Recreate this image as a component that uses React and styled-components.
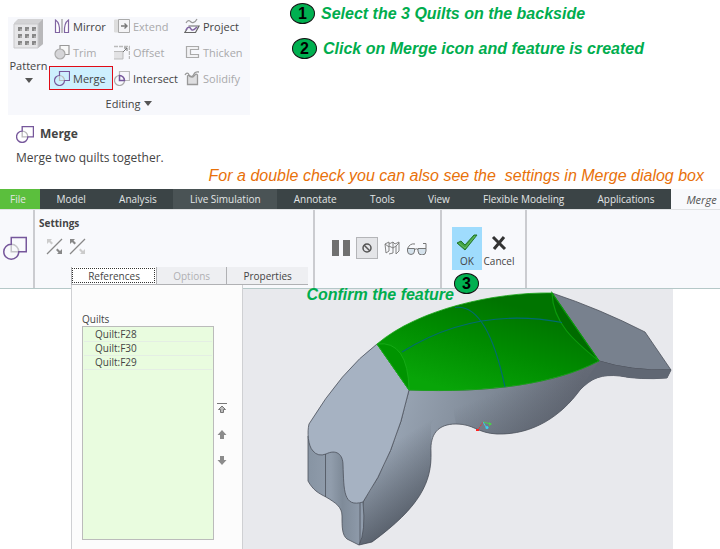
import React from "react";
import styled, { createGlobalStyle } from "styled-components";

const commands = [
    { name: "Mirror", icon: "mirror" },
    { name: "Extend", icon: "extend", off: true },
    { name: "Project", icon: "project" },
    { name: "Trim", icon: "trim", off: true },
    { name: "Offset", icon: "offset", off: true },
    { name: "Thicken", icon: "thicken", off: true },
    { name: "Merge", icon: "merge", active: true },
    { name: "Intersect", icon: "intersect" },
    { name: "Solidify", icon: "solidify", off: true },
];

const tabs = ["Model", "Analysis", "Live Simulation", "Annotate", "Tools", "View", "Flexible Modeling", "Applications"];

const quilts = ["Quilt:F28", "Quilt:F30", "Quilt:F29"];

const shapes = {
    mirror: (
        <g fill="#fff" strokeWidth="1.2">
            <path d="M1.500 2v12.500H5.500C6 8 4.500 4 1.500 2z" stroke="#8064a2" />
            <path d="M14.500 2v12.500H10.500C10 8 11.500 4 14.500 2z" stroke="#8064a2" />
            <path d="M8 1v14" stroke="#999" />
        </g>
    ),
    extend: (
        <g fill="none" stroke="#999">
            <path d="M.5 2h4v12h-4z" fill="#ddd" stroke="#ddd" />
            <path d="M4.500 1.500h11v13h-11z" fill="#f4f4f6" stroke="#aaa" />
            <path d="M7 8h6M10.500 5.500L13 8l-2.500 2.500" stroke="#777" strokeWidth="1.400" />
        </g>
    ),
    project: (
        <g fill="none" strokeWidth="1.200">
            <path d="M2 5c2-4 4-2 5-1s4 1 6-3" stroke="#999" />
            <path d="M4.500 8H15l-3.500 6.500H.8L3 11" stroke="#666" />
            <path d="M2 12c2-4 4-3 5-1s3 1 6-2" stroke="#8064a2" strokeWidth="1.600" />
        </g>
    ),
    trim: (
        <g fill="#e4e4e6" stroke="#aaa" strokeWidth="1.200">
            <path d="M6 1.500h9v9H6z" fill="#f8f8f8" stroke="#999" />
            <circle cx="6" cy="10" r="5" fill="#d5d5d8" />
        </g>
    ),
    offset: (
        <g fill="none" stroke="#999">
            <path d="M0 2.500h15.500V15" stroke="#bbb" strokeDasharray="4 1" strokeWidth="1.500" />
            <path d="M0 7.500h9V15H0" fill="#e2e2e4" stroke="#bbb" />
            <path d="M9 8l4-4M10 4h3v3" stroke="#777" />
        </g>
    ),
    thicken: <path d="M14.500 2.500h-12v11h12v-3h-8v-5h8z" fill="#f2f2f4" stroke="#aaa" strokeWidth="1.200" />,
    merge: (
        <g fill="none" strokeWidth="1.200">
            <path d="M5.500 5.500v5h5a5 5 0 0 0-5-5" stroke="#bbb" />
            <path d="M5.500 5.500V1.500h10v9h-5a5 5 0 1 1-5-5z" stroke="#76579b" />
        </g>
    ),
    // same overlap drawn as two full outlines, used at the large size
    quiltPair: (
        <g fill="none">
            <path d="M5.500 5.500v5h5a5 5 0 0 0-5-5" stroke="#c4c4c8" />
            <path d="M5.500 5.500V1h10v9.500h-5a5 5 0 1 1-5-5z" stroke="#76579b" />
        </g>
    ),
    intersect: (
        <g fill="none" strokeWidth="1.200">
            <path d="M5.500 5.500V1.500h10v9h-5" stroke="#bbb" />
            <path d="M5.500 5.500a5 5 0 1 0 5 5" stroke="#aaa" />
            <path d="M5.500 10.500v-5a5 5 0 0 1 5 5z" stroke="#76579b" strokeWidth="1.500" />
        </g>
    ),
    solidify: (
        <g fill="#dedee0" stroke="#999" strokeWidth="1.300">
            <path d="M3.500 6v8.500h10V5c-2-3-3 2-5 2S5 4 3.500 6z" />
            <path d="M1 5c1-2 3-3 4 0s4 2 5-1 3-2 5-2" fill="none" />
        </g>
    ),
};

const Icon = ({ name, size = 16 }) => (
    <svg width={size} height={size} viewBox="0 0 16 16" aria-hidden="true">{shapes[name]}</svg>
);

const PatternIcon = () => (
    <svg width="32" height="32" viewBox="0 0 32 32" aria-hidden="true">
        <path d="M1 5l4-4h25v25l-5 4H1z" fill="#d3d3d5" />
        <path d="M25 6l5-5v25l-5 4z" fill="#b8b8ba" />
        <path d="M1 6h24v24H1z" fill="#e6e6e8" stroke="#c9c9cb" />
        {[9, 16, 23].map(y => [5, 12, 19].map(x => (
            <g key={x + "-" + y}>
                <path d={`M${x} ${y}h4v4h-4z`} fill="#aaa" />
                <path d={`M${x} ${y}h4v2h-2v2h-2z`} fill="#888" />
            </g>
        )))}
    </svg>
);

const FlipIcon = ({ up, down }) => (
    <svg width="17" height="17" viewBox="0 0 17 17" aria-hidden="true">
        <path d="M1 16L16 1" stroke="#888" strokeWidth="1.200" />
        <path d="M1 1h5L4.500 2.500 7 5 5.500 6.500 3 4 1 6z" fill={up} />
        <path d="M16 16h-5l1.500-1.500L10 12l1.500-1.500L14 13l2-2z" fill={down} />
    </svg>
);

const MoveIcon = ({ kind }) => (
    <svg width="10" height="11" viewBox="0 0 10 11" aria-hidden="true">
        {kind === "top" && <path d="M0 .5h10M5 3l3.500 3.500h-2v3h-3v-3h-2z" stroke="#777" fill="#bbb" />}
        {kind === "up" && <path d="M5 1l4.500 5H7v4H3V6H.5z" fill="#8c8c8c" />}
        {kind === "down" && <path d="M5 10l4.500-5H7V1H3v4H.5z" fill="#8c8c8c" />}
    </svg>
);

const Model = () => (
    <Canvas viewBox="243 289 430 260" preserveAspectRatio="xMinYMin meet" role="img" aria-label="Merged quilt model">
        <defs>
            <linearGradient id="body" x1="400" y1="400" x2="560" y2="450" gradientUnits="userSpaceOnUse">
                <stop offset="0" stopColor="#98a4b3" />
                <stop offset=".55" stopColor="#7d8794" />
                <stop offset="1" stopColor="#666c78" />
            </linearGradient>
            <linearGradient id="lobe" x1="380" y1="450" x2="425" y2="525" gradientUnits="userSpaceOnUse">
                <stop offset="0" stopColor="#3c424c" stopOpacity="0" />
                <stop offset="1" stopColor="#3c424c" stopOpacity=".75" />
            </linearGradient>
            <linearGradient id="belly" x1="515" y1="385" x2="535" y2="438" gradientUnits="userSpaceOnUse">
                <stop offset="0" stopColor="#505661" stopOpacity="0" />
                <stop offset="1" stopColor="#505661" stopOpacity=".5" />
            </linearGradient>
            <linearGradient id="green" x1="480" y1="295" x2="450" y2="390" gradientUnits="userSpaceOnUse">
                <stop offset="0" stopColor="#007400" />
                <stop offset=".45" stopColor="#008b00" />
                <stop offset="1" stopColor="#08a508" />
            </linearGradient>
            <linearGradient id="side" x1="308" y1="0" x2="365" y2="0" gradientUnits="userSpaceOnUse">
                <stop offset="0" stopColor="#8794a3" />
                <stop offset=".4" stopColor="#919dac" />
                <stop offset=".6" stopColor="#7f8b99" />
                <stop offset="1" stopColor="#929eae" />
            </linearGradient>
        </defs>
        <g stroke="#4b515b" strokeWidth=".8" strokeLinejoin="round">
            <path d="M552 293Q600 309 645 332L671 370Q630 371 599 361z" fill="#78818e" />
            <path d="M409 390C490 393 555 384 599 361Q630 371 671 370L667 378Q640 380 620 376C602 374 591 378 580 390C561 416 533 435 497 434C477 433 474 424 456 424C438 424 430 434 431 452C432 482 420 507 372 542L359 545L363 502Q395 455 409 390z" fill="url(#body)" />
            <path d="M431 452C432 482 420 507 372 542L359 545L363 502Q395 455 409 390L450 392L431 424z" fill="url(#lobe)" stroke="none" />
            <path d="M450 391C500 392 555 384 599 361L594 379L580 390C561 416 533 435 497 434C477 433 474 424 456 424z" fill="url(#belly)" stroke="none" />
            <path d="M599 361Q630 371 671 370L667 378Q640 380 620 376C602 374 591 378 580 390z" fill="#606773" stroke="none" />
            <path d="M308 436V481C313 490 318 493 326 497C336 503 342 507 342 516C342 527 342 535 347 539L359 545Q366 532 363 502L350 450L334 440z" fill="url(#side)" />
            <path d="M377 344Q342 370 309 424C307 432 308 446 313 451Q318 457 326 454C336 449 343 454 343 465C344 490 343 508 363 502Q395 455 409 390z" fill="#a6b2c2" />
            <path d="M325.500 454v43M360 503v40" fill="none" />
        </g>
        <path d="M377 344C418 309 495 292 552 293L599 361C555 384 490 393 409 390z" fill="url(#green)" stroke="#15a515" strokeWidth=".8" />
        <path d="M552 293C553 323 574 341 599 361z" fill="#006b00" stroke="#0b9b0b" strokeWidth="1.200" />
        <path d="M377 344Q408 340 409 390z" fill="#009400" stroke="#1bad1b" strokeWidth=".8" />
        <path d="M402 352Q475 306 562 322.500M455 307.500C480 304 495 340 505 387" fill="none" stroke="#006b72" strokeWidth="1.200" />
        <path d="M483 422l-5 8" stroke="#e03434" strokeDasharray="2 1" />
        <path d="M476 429h3v2h-3z" fill="#f22" />
        <path d="M483 422l8 2" stroke="#4bd14b" />
        <path d="M489 422l3 2-3 2z" fill="#4bd14b" />
        <path d="M483 422l3 5" stroke="#3cc8e6" />
        <circle cx="487" cy="427.500" r="1.500" fill="#3cd0ee" />
    </Canvas>
);

export default function App() {
    return (
        <Page>
            <Global />
            <Intro>
                <Editing>
                    <Pattern>
                        <PatternIcon />
                        Pattern
                        <Caret />
                    </Pattern>
                    <Commands>
                        {commands.map(c => (
                            <Command key={c.name} $active={c.active} disabled={c.off}>
                                <Icon name={c.icon} />
                                {c.name}
                            </Command>
                        ))}
                    </Commands>
                    <GroupName>Editing <Caret /></GroupName>
                </Editing>
                <Steps>
                    <Step>
                        <Badge>1</Badge>
                        Select the 3 Quilts on the backside
                    </Step>
                    <Step $indent>
                        <Badge>2</Badge>
                        Click on Merge icon and feature is created
                    </Step>
                </Steps>
            </Intro>
            <Hint>
                <HintTitle><Icon name="merge" size={18} /> Merge</HintTitle>
                <HintText>Merge two quilts together.</HintText>
            </Hint>
            <Note>For a double check you can also see the&nbsp; settings in Merge dialog box</Note>
            <TabBar>
                <FileTab>File</FileTab>
                <DarkTabs>
                    {tabs.map(t => <Tab key={t} $lit={t === "Live Simulation"}>{t}</Tab>)}
                </DarkTabs>
                <CurrentTab>Merge</CurrentTab>
            </TabBar>
            <Dashboard>
                <ToolCell><Icon name="quiltPair" size={24} /></ToolCell>
                <SettingsCell>
                    <SettingsTitle>Settings</SettingsTitle>
                    <Flips>
                        <IconButton aria-label="Flip first quilt"><FlipIcon up="#ccc" down="#888" /></IconButton>
                        <IconButton aria-label="Flip second quilt"><FlipIcon up="#888" down="#ccc" /></IconButton>
                    </Flips>
                </SettingsCell>
                <PreviewCell>
                    <IconButton aria-label="Pause">
                        <svg width="18" height="18"><path d="M0 1h7v16H0zM11 1h7v16h-7z" fill="#707070" /></svg>
                    </IconButton>
                    <IconButton $boxed aria-label="No preview">
                        <svg width="10" height="10" fill="none" stroke="#555" strokeWidth="1.500">
                            <circle cx="5" cy="5" r="4" />
                            <path d="M2 2l6 6" />
                        </svg>
                    </IconButton>
                    <IconButton aria-label="Unattached">
                        <svg width="16" height="14" fill="none" stroke="#777" strokeWidth=".9">
                            <path d="M1 3l4-2v9l-3 2zM5 3l4-2 2 2 4-2v9l-3 3V5L9 7v5l-4 1M5 5l4 2M1 3l4 3M9 1v6M12 5l3-3" />
                        </svg>
                    </IconButton>
                    <IconButton aria-label="Verify">
                        <svg width="22" height="14" fill="none" stroke="#777">
                            <path d="M1.500 7.500h7v2.500a3 3 0 0 1-7 0zM12 7.500h8V10a3 3 0 0 1-8 0z" fill="#d5e2ec" />
                            <path d="M8.500 8.500q2-1.500 3.500 0M1.500 7.500Q4 2 9 3M20 7.500V2.500h-3" />
                        </svg>
                    </IconButton>
                </PreviewCell>
                <ConfirmCell>
                    <ConfirmButton $picked>
                        <svg width="22" height="18">
                            <path d="M1 9l4-2 4 4L18 1h3L9 16z" fill="#3da043" stroke="#23762b" />
                            <path d="M3 9l6 5L19 2" fill="none" stroke="#69bd5c" />
                        </svg>
                        OK
                    </ConfirmButton>
                    <ConfirmButton>
                        <svg width="18" height="18"><path d="M3 3l12 12M14 3L4 15" stroke="#333" strokeWidth="3" /></svg>
                        Cancel
                    </ConfirmButton>
                    <Callout>
                        Confirm the feature
                        <Badge>3</Badge>
                    </Callout>
                </ConfirmCell>
            </Dashboard>
            <Workspace>
                <Flyout>
                    <PanelTabs>
                        <PanelTab $picked>References</PanelTab>
                        <PanelTab disabled>Options</PanelTab>
                        <PanelTab>Properties</PanelTab>
                    </PanelTabs>
                    <Panel>
                        <PanelLabel id="quilts">Quilts</PanelLabel>
                        <Picker>
                            <QuiltList aria-labelledby="quilts">
                                {quilts.map(q => <Quilt key={q}>{q}</Quilt>)}
                            </QuiltList>
                            <Movers>
                                <IconButton aria-label="Move to top"><MoveIcon kind="top" /></IconButton>
                                <IconButton aria-label="Move up"><MoveIcon kind="up" /></IconButton>
                                <IconButton aria-label="Move down"><MoveIcon kind="down" /></IconButton>
                            </Movers>
                        </Picker>
                    </Panel>
                </Flyout>
                <Model />
            </Workspace>
        </Page>
    );
}

const Global = createGlobalStyle`
  * {
    box-sizing: border-box;
  }

  body {
    margin: 0;
    background: #fff;
    color: #444;
    font: 12px "Open Sans", sans-serif;
  }

  button {
    margin: 0;
    padding: 0;
    border: 0;
    background: none;
    color: inherit;
    font: inherit;
  }

  svg {
    display: block;
    flex: none;
  }
`

const Page = styled.main`
  display: flex;
  flex-direction: column;
  min-height: 100vh;
`

const Intro = styled.section`
  display: flex;
  align-items: flex-start;
  gap: 40px;
  padding-left: 8px;
`

const Editing = styled.div`
  display: grid;
  grid-template-columns: 41px auto;
  width: 242px;
  height: 98px;
  margin-top: 17px;
  background: #f7f8fc;
  font-size: 11px;
`

const Caret = styled.span`
  display: inline-block;
  border: 4px solid transparent;
  border-top: 5px solid #555;
  border-bottom: 0;
`

const Pattern = styled.button`
  display: flex;
  flex-direction: column;
  align-items: center;
  justify-content: flex-start;
  line-height: 16px;
  white-space: nowrap;

  svg {
    margin: 1px 0 8px;
  }

  ${Caret} {
    margin-top: 4px;
  }
`

const Commands = styled.div`
  display: grid;
  grid-template-columns: 64px 70px 1fr;
  grid-auto-rows: 24px;
  row-gap: 2px;
  margin-top: -3px;
`

const Command = styled.button`
  display: flex;
  align-items: center;
  gap: 3px;
  white-space: nowrap;
  border: 1px solid ${({ $active }) => $active ? "#e00b16" : "transparent"};
  background: ${({ $active }) => $active ? "#cdeffe" : "none"};

  &:nth-child(3n + 1) {
    padding-left: 4px;
  }

  &:disabled {
    color: #a9a9ab;
  }
`

const GroupName = styled.div`
  grid-column: 1 / -1;
  padding-top: 3px;
  text-align: center;
  line-height: 16px;

  ${Caret} {
    margin: 0 0 2px 1px;
  }
`

const Steps = styled.div`
  display: flex;
  flex-direction: column;
  gap: 14px;
  padding-top: 3px;
`

const Step = styled.p`
  display: flex;
  align-items: center;
  gap: 6px;
  margin: 0;
  padding-left: ${({ $indent }) => $indent ? "2px" : "0"};
  color: #00ad4e;
  font: italic bold 16px "Liberation Sans", Arial, sans-serif;
  white-space: nowrap;
`

const Badge = styled.span`
  display: flex;
  align-items: center;
  justify-content: center;
  width: 25px;
  height: 21px;
  border: 1px solid #111;
  border-radius: 50%;
  background: #00b050;
  color: #000;
  font: bold 16px "Liberation Sans", Arial, sans-serif;
`

const Hint = styled.section`
  padding: 10px 16px 0;
`

const HintTitle = styled.h1`
  display: flex;
  align-items: center;
  gap: 6px;
  margin: 0;
  font-size: 12px;
  line-height: 18px;
`

const HintText = styled.p`
  margin: 6px 0 0;
  line-height: 18px;
`

const Note = styled.p`
  margin: 0;
  padding-right: 16px;
  color: #e8710a;
  font: italic 16px/18px "Liberation Sans", Arial, sans-serif;
  text-align: right;
  white-space: nowrap;
`

const TabBar = styled.nav`
  display: flex;
  height: 20px;
  margin-top: 4px;
  background: #f8f9fc;
  font-size: 10px;
`

const DarkTabs = styled.div`
  display: flex;
  flex: 1;
  background: #3b4446;
`

const Tab = styled.button`
  flex: 1 1 auto;
  color: #e3e6e6;
  background: ${({ $lit }) => $lit ? "#4a5355" : "none"};
  white-space: nowrap;
`

const FileTab = styled(Tab)`
  flex: 0 0 40px;
  padding-right: 4px;
  background: #5bbf3d;
`

const CurrentTab = styled(Tab)`
  flex: 0 0 49px;
  padding-left: 12px;
  color: #555;
  font-size: 11px;
  font-style: italic;
`

const Dashboard = styled.section`
  display: flex;
  height: 80px;
  background: #f8f9fc;
  border-bottom: 1px solid #b5c8c8;
  border-top: 1px solid #e0e2e4;
`

const Cell = styled.div`
  display: flex;
  border-right: 2px solid #cbccd0;
`

const ToolCell = styled(Cell)`
  flex: 0 0 35px;
  align-items: center;
  padding: 0 0 3px 3px;
`

const SettingsCell = styled(Cell)`
  flex: 0 1 280px;
  flex-direction: column;
  padding: 5px 4px;
`

const SettingsTitle = styled.h2`
  margin: 0;
  font-size: 10px;
  line-height: 16px;
`

const Flips = styled.div`
  display: flex;
  gap: 6px;
  padding: 7px;
`

const IconButton = styled.button`
  display: flex;
  align-items: center;
  justify-content: center;
  width: ${({ $boxed }) => $boxed ? "22px" : "auto"};
  height: ${({ $boxed }) => $boxed ? "22px" : "auto"};
  border: ${({ $boxed }) => $boxed ? "1px solid #b4b5b8" : "0"};
  background: ${({ $boxed }) => $boxed ? "#e4e5e8" : "none"};
`

const PreviewCell = styled(Cell)`
  flex: 0 0 127px;
  align-items: center;
  gap: 6px;
  padding: 0 0 2px 17px;
`

const ConfirmCell = styled(Cell)`
  position: relative;
  flex: 0 0 85px;
  align-items: flex-start;
  gap: 2px;
  padding: 17px 10px 0;
`

const ConfirmButton = styled.button`
  display: flex;
  flex-direction: column;
  align-items: center;
  gap: 2px;
  width: 30px;
  height: 43px;
  padding-top: 7px;
  font-size: 10px;
  line-height: 14px;
  background: ${({ $picked }) => $picked ? "#9fdcfd" : "none"};
`

const Callout = styled.div`
  position: absolute;
  z-index: 2;
  right: 46px;
  bottom: -16px;
  display: flex;
  align-items: flex-end;
  color: #00ad4e;
  font: italic bold 16px "Liberation Sans", Arial, sans-serif;
  white-space: nowrap;

  ${Badge} {
    margin-bottom: 10px;
  }
`

const Workspace = styled.section`
  display: flex;
  flex: 1;
  margin: 0 47px 0 71px;
  background: #e8e9ed;
`

const Flyout = styled.aside`
  display: flex;
  flex-direction: column;
  flex: 0 0 172px;
  min-width: 0;
  margin-top: -22px;
`

const PanelTabs = styled.div`
  display: flex;
  width: 237px;
  height: 18px;
  background: #eeeff2;
  border-bottom: 1px solid #b0b1b4;
`

const PanelTab = styled.button`
  flex: 1 1 auto;
  font-size: 10px;
  border-left: 1px solid #b0b1b4;
  background: ${({ $picked }) => $picked ? "#fff" : "none"};
  outline: ${({ $picked }) => $picked ? "1px dotted #333" : "none"};
  outline-offset: -2px;

  &:disabled {
    color: #b0b0b3;
  }
`

const Panel = styled.div`
  display: flex;
  flex: 1;
  flex-direction: column;
  padding: 27px 15px 9px 10px;
  background: #fcfcfc;
  border: 1px solid #cfd0d3;
  border-width: 0 1px;
`

const PanelLabel = styled.h3`
  margin: 0;
  font-size: 10px;
  font-weight: normal;
  line-height: 14px;
`

const Picker = styled.div`
  display: flex;
  flex: 1;
  gap: 3px;
`

const QuiltList = styled.ul`
  flex: 1;
  margin: 0;
  padding: 1px;
  border: 1px solid #bbb;
  background: #e9fcdf;
  list-style: none;
`

const Quilt = styled.li`
  padding-left: 11px;
  border-bottom: 1px solid #e4eee4;
  font-size: 10px;
  line-height: 13px;
`

const Movers = styled.div`
  display: flex;
  flex-direction: column;
  gap: 15px;
  padding-top: 77px;
`

const Canvas = styled.svg`
  flex: 1 1 0;
  min-width: 0;
  align-self: flex-start;
`
